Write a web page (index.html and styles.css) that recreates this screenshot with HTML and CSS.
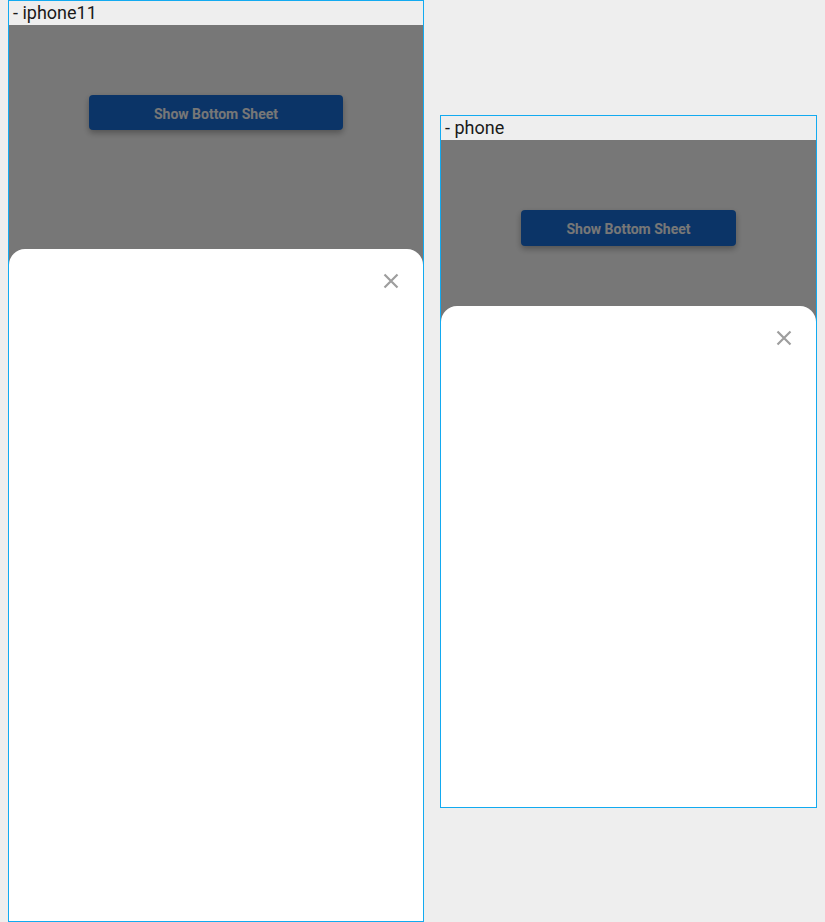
FILE: index.html
```html
<!DOCTYPE html>
<html lang="en">
<head>
<meta charset="utf-8">
<title>Bottom Sheet Preview</title>
<link rel="stylesheet" href="styles.css">
</head>
<body>
  <section class="device device-iphone11">
    <div class="device-label">- iphone11</div>
    <div class="screen">
      <div class="app">
        <button class="show-btn" type="button">Show Bottom Sheet</button>
      </div>
      <div class="backdrop"></div>
      <div class="sheet">
        <button class="close-btn" type="button" aria-label="Close">
          <svg viewBox="0 0 16 16" width="16" height="16"><path d="M1.5 1.5 L14.5 14.5 M14.5 1.5 L1.5 14.5" /></svg>
        </button>
      </div>
    </div>
  </section>
  <section class="device device-phone">
    <div class="device-label">- phone</div>
    <div class="screen">
      <div class="app">
        <button class="show-btn" type="button">Show Bottom Sheet</button>
      </div>
      <div class="backdrop"></div>
      <div class="sheet">
        <button class="close-btn" type="button" aria-label="Close">
          <svg viewBox="0 0 16 16" width="16" height="16"><path d="M1.5 1.5 L14.5 14.5 M14.5 1.5 L1.5 14.5" /></svg>
        </button>
      </div>
    </div>
  </section>
</body>
</html>
```

FILE: styles.css
```css
html, body {
  height: 100%;
}
body {
  margin: 0 8px;
  background: #eeeeee;
  display: flex;
  align-items: center;
  gap: 16px;
  font-family: Roboto, "Noto Sans", sans-serif;
  overflow: hidden;
}
.device {
  border: 1px solid #12aaf0;
  background: #eeeeee;
  display: flex;
  flex-direction: column;
  flex: none;
}
.device-label {
  height: 24px;
  line-height: 24px;
  padding-left: 4px;
  font-size: 18px;
  color: #1a1a1a;
  background: #eeeeee;
}
.device-iphone11 .screen {
  width: 414px;
  height: 896px;
}
.device-phone .screen {
  width: 375px;
  height: 667px;
}
.screen {
  position: relative;
  overflow: hidden;
  background: #ffffff;
}
.app {
  display: flex;
  justify-content: center;
  padding-top: 70px;
}
.show-btn {
  height: 36px;
  border: none;
  border-radius: 4px;
  background: #1870dc;
  color: #ffffff;
  font-family: Roboto, sans-serif;
  font-weight: 700;
  font-size: 14px;
  padding: 3px 0 0;
  box-shadow: 0 3px 6px rgba(0,0,0,0.3);
}
.device-iphone11 .show-btn { width: 254px; height: 35px; }
.device-phone .show-btn { width: 215px; }
.backdrop {
  position: absolute;
  inset: 0;
  background: rgba(0,0,0,0.533);
}
.sheet {
  position: absolute;
  left: 0;
  right: 0;
  bottom: 0;
  height: 75%;
  background: #ffffff;
  border-radius: 16px 16px 0 0;
  display: flex;
  justify-content: flex-end;
  align-items: flex-start;
  padding: 24px 24px 0 0;
  box-sizing: border-box;
}
.close-btn {
  border: none;
  background: none;
  padding: 0;
  width: 16px;
  height: 16px;
  display: block;
}
.close-btn svg {
  display: block;
  stroke: #9e9e9e;
  stroke-width: 2.2;
  fill: none;
}
```
